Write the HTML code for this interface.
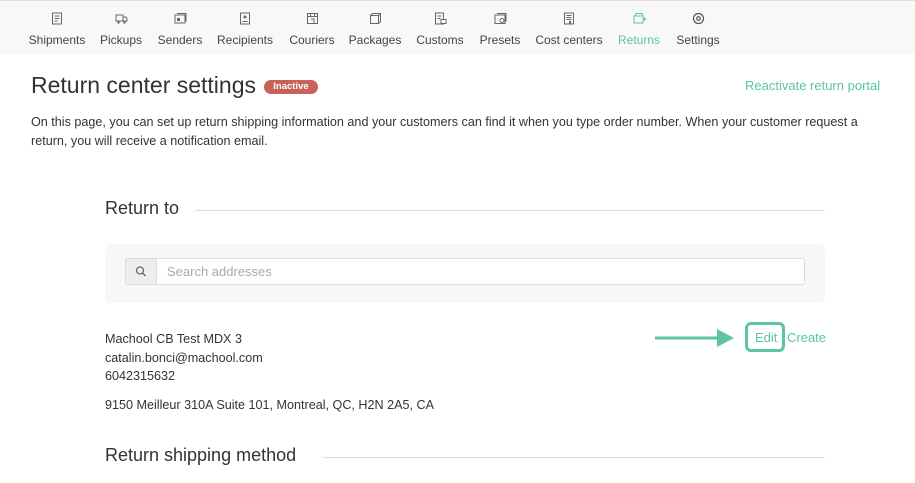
<!DOCTYPE html>
<html><head><style>
*{margin:0;padding:0;box-sizing:border-box}
body{width:915px;height:483px;overflow:hidden;background:#fff;font-family:"Liberation Sans",sans-serif;color:#333;position:relative}
.nav{position:absolute;left:0;top:0;width:915px;height:54px;background:#f8f8f8;border-top:1px solid #e2e2e2}
.it{position:absolute;top:0;transform:translateX(-50%);text-align:center;font-size:12px;color:#444;white-space:nowrap}
.it svg{position:absolute;left:50%;top:11px;margin-left:-6px}
.it span{position:absolute;top:32px;left:50%;transform:translateX(-50%)}
.a{position:absolute;white-space:nowrap}
</style></head><body>
<div class="nav">
<div class="it" style="left:57px"><svg width="12" height="13"><rect x="1.5" y="1" width="9" height="11" fill="none" stroke="#666"/><path d="M3.5 4h5M3.5 6.5h5M3.5 9h3" stroke="#666"/></svg><span>Shipments</span></div>
<div class="it" style="left:121px"><svg width="13" height="13"><rect x="1" y="3" width="7" height="6" fill="none" stroke="#666"/><path d="M8 5h3l1 2v2H8" fill="none" stroke="#666"/><circle cx="3.5" cy="10.5" r="1.2" fill="#666"/><circle cx="9.5" cy="10.5" r="1.2" fill="#666"/></svg><span>Pickups</span></div>
<div class="it" style="left:180px"><svg width="13" height="13"><rect x="1" y="3" width="10" height="8" fill="none" stroke="#666"/><path d="M3 1.5h9v8" fill="none" stroke="#666"/><rect x="3" y="6" width="3" height="3" fill="#666"/></svg><span>Senders</span></div>
<div class="it" style="left:245px"><svg width="12" height="13"><rect x="1.5" y="1" width="9" height="11" fill="none" stroke="#666"/><circle cx="6" cy="5" r="1.5" fill="#666"/><path d="M3.5 9.5h5" stroke="#666"/></svg><span>Recipients</span></div>
<div class="it" style="left:312px"><svg width="13" height="13"><rect x="1.5" y="1.5" width="10" height="10" fill="none" stroke="#666"/><path d="M1.5 4.5h10M4.5 1.5v3M8.5 1.5v3M5 7h3v4.5" fill="none" stroke="#666"/></svg><span>Couriers</span></div>
<div class="it" style="left:375px"><svg width="13" height="13"><rect x="1.5" y="3.5" width="8" height="8" fill="none" stroke="#666"/><path d="M1.5 3.5l2-2h8v8l-2 2M9.5 3.5l2-2" fill="none" stroke="#666"/></svg><span>Packages</span></div>
<div class="it" style="left:440px"><svg width="13" height="13"><rect x="1.5" y="1" width="8" height="11" fill="none" stroke="#666"/><path d="M3.5 4h4M3.5 6.5h3" stroke="#666"/><rect x="7" y="7.5" width="5" height="4" fill="#fff" stroke="#666"/></svg><span>Customs</span></div>
<div class="it" style="left:500px"><svg width="13" height="13"><rect x="1" y="3" width="10" height="8.5" fill="none" stroke="#666"/><path d="M3 1.5h9v8" fill="none" stroke="#666"/><circle cx="8" cy="8.5" r="2" fill="#fff" stroke="#666"/></svg><span>Presets</span></div>
<div class="it" style="left:569px"><svg width="12" height="13"><rect x="1.5" y="1" width="9" height="11" fill="none" stroke="#666"/><path d="M3.5 3.5h5M3.5 5.5h5M3.5 7.5h5" stroke="#666"/><rect x="6" y="9" width="2" height="3" fill="#666"/></svg><span>Cost centers</span></div>
<div class="it" style="left:639px"><svg width="13" height="13"><rect x="1" y="4" width="9" height="7" fill="none" stroke="#5cc4a6"/><path d="M2 4l1-2.5h6l1 2.5M10 7h2.5M11 5.5l1.5 1.5-1.5 1.5" fill="none" stroke="#5cc4a6"/></svg><span style="color:#5cc4a6">Returns</span></div>
<div class="it" style="left:698px"><svg width="13" height="13"><circle cx="6.5" cy="6.5" r="5" fill="none" stroke="#555" stroke-width="1.2"/><circle cx="6.5" cy="6.5" r="1.8" fill="none" stroke="#555" stroke-width="1.2"/></svg><span>Settings</span></div>
</div>

<div class="a" style="left:31px;top:72px;font-size:23px;color:#333">Return center settings</div>
<div class="a" style="left:264px;top:80px;width:54px;height:14px;background:#c9605a;border-radius:7px;color:#fff;font-size:9.5px;font-weight:bold;text-align:center;line-height:14px">Inactive</div>
<div class="a" style="left:745px;top:78px;font-size:13px;color:#5cc4a6">Reactivate return portal</div>
<div class="a" style="left:31px;top:113px;font-size:12.6px;line-height:18.5px;color:#333;white-space:normal;width:862px">On this page, you can set up return shipping information and your customers can find it when you type order number. When your customer request a return, you will receive a notification email.</div>

<div class="a" style="left:105px;top:198px;font-size:18px;color:#333">Return to</div>
<div class="a" style="left:195px;top:210px;width:630px;height:1px;background:#ddd"></div>
<div class="a" style="left:105px;top:244px;width:720px;height:59px;background:#f7f7f7;border-radius:6px"></div>
<div class="a" style="left:125px;top:258px;width:680px;height:27px;background:#fff;border:1px solid #dcdcdc;border-radius:3px"></div>
<div class="a" style="left:125px;top:258px;width:32px;height:27px;background:#eceeef;border:1px solid #dcdcdc;border-radius:3px 0 0 3px"><svg width="30" height="25"><circle cx="14" cy="11.5" r="3.5" fill="none" stroke="#666" stroke-width="1.3"/><path d="M16.5 14l3 3" stroke="#666" stroke-width="1.4"/></svg></div>
<div class="a" style="left:167px;top:264px;font-size:13px;color:#aaa">Search addresses</div>

<div class="a" style="left:105px;top:330px;font-size:12.6px;line-height:18.5px;color:#333">Machool CB Test MDX 3<br>catalin.bonci@machool.com<br>6042315632</div>
<div class="a" style="left:105px;top:398px;font-size:12.6px;color:#333">9150 Meilleur 310A Suite 101, Montreal, QC, H2N 2A5, CA</div>
<svg class="a" style="left:650px;top:325px" width="90" height="26"><path d="M5 13H70" stroke="#5cc4a6" stroke-width="3"/><path d="M67 4l17 9-17 9z" fill="#5cc4a6"/></svg>
<div class="a" style="left:745px;top:322px;width:40px;height:30px;border:3px solid #5cc4a6;border-radius:6px"></div>
<div class="a" style="left:755px;top:330px;font-size:13px;color:#5cc4a6">Edit</div>
<div class="a" style="left:782px;top:331px;width:1px;height:13px;background:#5cc4a6"></div>
<div class="a" style="left:787px;top:330px;font-size:13px;color:#5cc4a6">Create</div>

<div class="a" style="left:105px;top:445px;font-size:18px;color:#333">Return shipping method</div>
<div class="a" style="left:323px;top:457px;width:502px;height:1px;background:#ddd"></div>
</body></html>
